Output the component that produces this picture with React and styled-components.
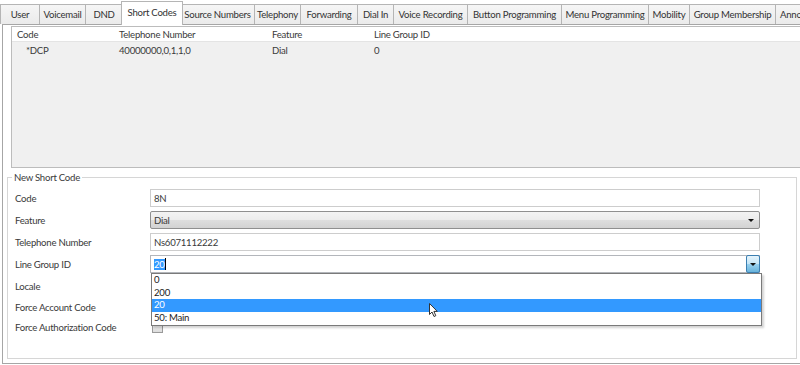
import React from 'react';
import styled, { createGlobalStyle } from 'styled-components';

const Global = createGlobalStyle`
  html, body { margin: 0; padding: 0; background: #fff; }
  body {
    font-family: Lato, "Open Sans", "DejaVu Sans", sans-serif;
    font-size: 9.6px;
    letter-spacing: -0.25px;
    color: #3a3a3a;
  }
`;

const Window = styled.div`
  position: relative;
  width: 800px;
  height: 365px;
  overflow: hidden;
  background: #fff;
  display: flex;
  flex-direction: column;
`;

const TabStrip = styled.div`
  display: flex;
  align-items: flex-end;
  height: 24px;
  flex: none;
`;

const Tab = styled.div`
  position: relative;
  flex: none;
  box-sizing: border-box;
  width: ${(p) => p.$w + (p.$active ? 4 : 0)}px;
  height: ${(p) => (p.$active ? 24 : 20)}px;
  margin: ${(p) => (p.$active ? '0 -2px -1px' : '0')};
  z-index: ${(p) => (p.$active ? 2 : 1)};
  display: flex;
  align-items: center;
  justify-content: ${(p) => (p.$clip ? 'flex-start' : 'center')};
  padding-left: ${(p) => (p.$clip ? 4 : 0)}px;
  white-space: nowrap;
  overflow: hidden;
  border: 1px solid #b5b5b5;
  border-left: ${(p) => (p.$first || p.$active ? '1px solid #b5b5b5' : 'none')};
  border-bottom: none;
  background: ${(p) => (p.$active ? '#fff' : 'linear-gradient(#f5f5f5, #ebebeb)')};
  color: #333;
  padding-bottom: ${(p) => (p.$active ? 2 : 0)}px;
`;

const Page = styled.div`
  flex: none;
  margin-left: 2px;
  height: 340px;
  box-sizing: border-box;
  border: 1px solid #a6a6a6;
  border-right: none;
  background: #fff;
  display: flex;
  flex-direction: column;
`;

const ListPanel = styled.div`
  flex: none;
  margin: 1px -10px 0 8px;
  height: 142px;
  box-sizing: border-box;
  border: 1px solid #bcbcbc;
  background: #f0f0f0;
`;

const ListRow = styled.div`
  display: grid;
  grid-template-columns: 102px 153px 102px 1fr;
  align-items: center;
  box-sizing: border-box;
  height: ${(p) => (p.$header ? 15 : 16)}px;
  padding-left: 5px;
  background: ${(p) => (p.$header ? '#fff' : 'transparent')};
  border-bottom: ${(p) => (p.$header ? '1px solid #e4e4e4' : 'none')};
  color: #3a3a3a;
`;

const Cell = styled.div`
  padding-left: ${(p) => (p.$indent ? 9 : 0)}px;
  white-space: nowrap;
`;

const GroupBox = styled.div`
  flex: none;
  margin: 9px 3px 0 4px;
  height: 182px;
  box-sizing: border-box;
  border: 1px solid #d6d6d6;
  display: flex;
  flex-direction: column;
`;

const Legend = styled.div`
  align-self: flex-start;
  margin: -7px 0 0 4px;
  padding: 0 2px;
  line-height: 13px;
  background: #fff;
`;

const Form = styled.div`
  margin-top: 3px;
  padding-left: 7px;
  display: flex;
  flex-direction: column;
`;

const FormRow = styled.div`
  position: relative;
  display: flex;
  align-items: center;
  height: ${(p) => p.$h}px;
  z-index: ${(p) => (p.$raised ? 3 : 1)};
`;

const Label = styled.div`
  flex: none;
  width: 135px;
  white-space: nowrap;
`;

const TextBox = styled.div`
  position: relative;
  flex: none;
  box-sizing: border-box;
  width: 610px;
  height: 18px;
  border: 1px solid ${(p) => (p.$combo ? '#b3b6bb' : '#cdcdcd')};
  background: #fff;
  display: flex;
  align-items: center;
  padding-left: 3px;
`;

const SelectBox = styled.div`
  flex: none;
  box-sizing: border-box;
  width: 610px;
  height: 18px;
  border: 1px solid #8f8f8f;
  border-radius: 2px;
  background: linear-gradient(#f3f3f3, #ececec 48%, #dedede 52%, #d2d2d2);
  display: flex;
  align-items: center;
  justify-content: space-between;
  padding: 0 5px 0 3px;
`;

const Arrow = styled.span`
  width: 0;
  height: 0;
  border-left: 3px solid transparent;
  border-right: 3px solid transparent;
  border-top: 3px solid #111;
`;

const Selected = styled.span`
  background: #3399ff;
  color: #fff;
`;

const Caret = styled.span`
  display: inline-block;
  width: 1px;
  height: 12px;
  background: #000;
`;

const ComboButton = styled.div`
  position: absolute;
  top: -1px;
  right: -1px;
  box-sizing: border-box;
  width: 14px;
  height: 18px;
  border: 1px solid #3c7fb1;
  border-radius: 2px;
  background: linear-gradient(#e5f4fc, #c4e5f6 50%, #98d1ef 52%, #68b3db);
  display: flex;
  align-items: center;
  justify-content: center;
`;

const DropList = styled.div`
  position: absolute;
  left: 0;
  top: 17px;
  box-sizing: border-box;
  width: 611px;
  padding: 0 0 1px;
  border: 1px solid #7a7a7a;
  background: #fff;
  box-shadow: 2px 2px 2px rgba(0, 0, 0, 0.18);
`;

const DropItem = styled.div`
  height: 12.5px;
  line-height: 12.5px;
  padding-left: 2px;
  background: ${(p) => (p.$hl ? '#3399ff' : 'transparent')};
  color: ${(p) => (p.$hl ? '#fff' : '#222')};
`;

const CheckBox = styled.div`
  flex: none;
  margin-left: 2px;
  box-sizing: border-box;
  width: 11px;
  height: 10px;
  border: 1px solid #9a9a9a;
  background: linear-gradient(#f4f4f4, #dcdcdc);
`;

const Pointer = styled.svg`
  position: absolute;
  left: 429px;
  top: 303px;
  z-index: 10;
`;

const tabs = [
  { label: 'User', w: 40 },
  { label: 'Voicemail', w: 46 },
  { label: 'DND', w: 37 },
  { label: 'Short Codes', w: 58, active: true },
  { label: 'Source Numbers', w: 74 },
  { label: 'Telephony', w: 46 },
  { label: 'Forwarding', w: 57 },
  { label: 'Dial In', w: 36 },
  { label: 'Voice Recording', w: 74 },
  { label: 'Button Programming', w: 94 },
  { label: 'Menu Programming', w: 87 },
  { label: 'Mobility', w: 41 },
  { label: 'Group Membership', w: 86 },
  { label: 'Announcements', w: 80, clip: true },
];

const options = ['0', '200', '20', '50: Main'];

export default function App() {
  return (
    <>
      <Global />
      <Window>
        <TabStrip>
          {tabs.map((t, i) => (
            <Tab key={t.label} $w={t.w} $active={t.active} $first={i === 0} $clip={t.clip}>
              {t.label}
            </Tab>
          ))}
        </TabStrip>
        <Page>
          <ListPanel>
            <ListRow $header>
              <Cell>Code</Cell>
              <Cell>Telephone Number</Cell>
              <Cell>Feature</Cell>
              <Cell>Line Group ID</Cell>
            </ListRow>
            <ListRow>
              <Cell $indent>*DCP</Cell>
              <Cell>40000000,0,1,1,0</Cell>
              <Cell>Dial</Cell>
              <Cell>0</Cell>
            </ListRow>
          </ListPanel>
          <GroupBox>
            <Legend>New Short Code</Legend>
            <Form>
              <FormRow $h={22}>
                <Label>Code</Label>
                <TextBox>8N</TextBox>
              </FormRow>
              <FormRow $h={22}>
                <Label>Feature</Label>
                <SelectBox>
                  <span>Dial</span>
                  <Arrow />
                </SelectBox>
              </FormRow>
              <FormRow $h={22}>
                <Label>Telephone Number</Label>
                <TextBox>Ns6071112222</TextBox>
              </FormRow>
              <FormRow $h={22} $raised>
                <Label>Line Group ID</Label>
                <TextBox $combo>
                  <Selected>20</Selected>
                  <Caret />
                  <ComboButton>
                    <Arrow />
                  </ComboButton>
                  <DropList>
                    {options.map((o) => (
                      <DropItem key={o} $hl={o === '20'}>
                        {o}
                      </DropItem>
                    ))}
                  </DropList>
                </TextBox>
              </FormRow>
              <FormRow $h={22}>
                <Label>Locale</Label>
              </FormRow>
              <FormRow $h={21}>
                <Label>Force Account Code</Label>
                <CheckBox />
              </FormRow>
              <FormRow $h={19}>
                <Label>Force Authorization Code</Label>
                <CheckBox />
              </FormRow>
            </Form>
          </GroupBox>
        </Page>
        <Pointer width="10" height="15" viewBox="0 0 10 15">
          <path
            d="M0.5 0.5 L0.5 11.5 L3 9 L5 13.5 L6.8 12.7 L4.9 8.4 L8.3 8.4 Z"
            fill="#fff"
            stroke="#333"
            strokeWidth="1"
            strokeLinejoin="round"
          />
        </Pointer>
      </Window>
    </>
  );
}
